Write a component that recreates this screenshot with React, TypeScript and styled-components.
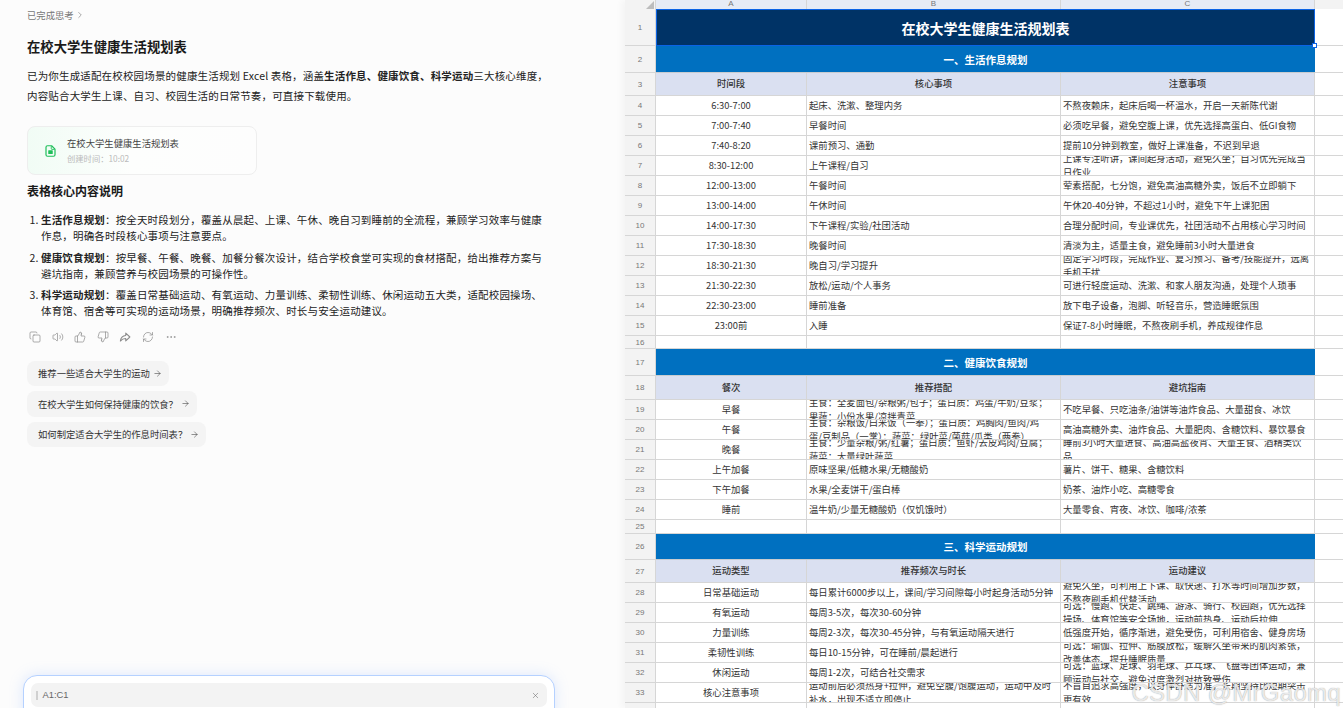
import styled, { createGlobalStyle } from "styled-components";
import {
  ArrowRight,
  ChevronRight,
  Copy,
  Ellipsis,
  RefreshCw,
  ThumbsDown,
  ThumbsUp,
  Volume2,
  X,
} from "lucide-react";

const GlobalStyle = createGlobalStyle`
  html, body {
    margin: 0;
    padding: 0;
    background: #fff;
  }
  * {
    box-sizing: border-box;
  }
`;

const FONT = `"Noto Sans CJK SC", "Noto Sans", sans-serif`;
const COLUMNS = "31px 151px 254px 254px 28px";
const LINE = "#d6d6d6";

const Page = styled.div`
  display: flex;
  width: 1343px;
  height: 708px;
  overflow: hidden;
  font-family: ${FONT};
  color: #222;
`;

/* ---------- chat side ---------- */

const ChatPanel = styled.div`
  flex: 0 0 625px;
  height: 708px;
  padding: 8px 0 0 27px;
  background: #fcfcfc;
  overflow: hidden;
`;

const Thinking = styled.div`
  display: flex;
  align-items: center;
  gap: 1px;
  height: 14px;
  font-size: 9.33px;
  line-height: 14px;
  color: #777;
`;

const Title = styled.h1`
  margin: 15px 0 0;
  font-size: 13.33px;
  line-height: 20px;
  font-weight: 700;
  color: #1a1a1a;
`;

const Intro = styled.p`
  width: 522px;
  margin: 9px 0 0;
  font-size: 10.5px;
  letter-spacing: 0.16px;
  line-height: 20px;
  color: #222;

  b {
    font-weight: 700;
  }
`;

const FileCard = styled.div`
  display: flex;
  align-items: center;
  gap: 11px;
  width: 230px;
  height: 49px;
  margin-top: 20px;
  padding-left: 17px;
  border: 1px solid #eeeeee;
  border-radius: 8px;
  background: linear-gradient(90deg, #f1fcf5 0%, #fdfefd 45%, #fdfdfd 100%);
  color: #1fbf5a;
`;

const FileName = styled.div`
  font-size: 9.33px;
  line-height: 15px;
  color: #444;
`;

const FileTime = styled.div`
  font-size: 8.3px;
  line-height: 15px;
  color: #bbb;
`;

const SubTitle = styled.h2`
  margin: 8px 0 0;
  font-size: 12px;
  line-height: 16px;
  font-weight: 700;
  color: #1a1a1a;
`;

const List = styled.ol`
  display: flex;
  flex-direction: column;
  gap: 5.5px;
  width: 518px;
  margin: 13px 0 0;
  padding: 0 0 0 14px;
  font-size: 10.5px;
  letter-spacing: 0.16px;
  line-height: 16px;
  color: #222;

  b {
    font-weight: 700;
  }
`;

const Actions = styled.div`
  display: flex;
  align-items: center;
  gap: 10.6px;
  height: 12px;
  margin: 12px 0 0 2px;
  color: #8a8a8a;
`;

const Suggestions = styled.div`
  display: flex;
  flex-direction: column;
  align-items: flex-start;
  gap: 5px;
  margin-top: 17.5px;
`;

const Pill = styled.div`
  display: flex;
  align-items: center;
  gap: 3px;
  height: 25.5px;
  padding: 0 7px 0 11px;
  border-radius: 8px;
  background: #f4f4f4;
  font-size: 9.33px;
  color: #333;
`;

const Composer = styled.div`
  width: 532px;
  height: 50px;
  margin: 228px 0 0 -4px;
  padding: 7px 7px 0;
  border: 1px solid #b5d1ff;
  border-radius: 14px;
  background: #fff;
  box-shadow: 0 0 14px rgba(140, 180, 255, 0.28);
`;

const Quote = styled.div`
  display: flex;
  align-items: center;
  gap: 5px;
  height: 24px;
  padding: 0 7px 0 5px;
  border-radius: 7px;
  background: #f3f3f3;
  font-family: "Liberation Sans", sans-serif;
  font-size: 9.33px;
  color: #666;
`;

const QuoteBar = styled.span`
  width: 1.5px;
  height: 9px;
  background: #d0d0d0;
`;

const QuoteText = styled.span`
  flex: 1;
`;

/* ---------- sheet side ---------- */

const Sheet = styled.div`
  position: relative;
  flex: 1;
  height: 708px;
  overflow: hidden;
  background: #fff;
  box-shadow: -4px 0 6px rgba(0, 0, 0, 0.03);
`;

const SheetRow = styled.div<{ $h: number }>`
  display: grid;
  grid-template-columns: ${COLUMNS};
  height: ${(p) => p.$h}px;
`;

const Corner = styled.div`
  position: relative;
  background: #f3f3f3;
  border-right: 1px solid ${LINE};

  &::after {
    content: "";
    position: absolute;
    right: 1px;
    bottom: 0;
    border-left: 8px solid transparent;
    border-bottom: 8px solid #bdbdbd;
  }
`;

const ColHead = styled.div`
  display: flex;
  justify-content: center;
  align-items: flex-start;
  overflow: hidden;
  background: #e6ebf5;
  border-right: 1px solid ${LINE};
  font-family: "Liberation Sans", sans-serif;
  font-size: 8px;
  line-height: 8px;
  color: #777;
`;

const ColTail = styled.div`
  background: #f3f3f3;
`;

const RowHead = styled.div`
  display: flex;
  justify-content: center;
  align-items: center;
  background: #f3f3f3;
  border-right: 1px solid ${LINE};
  border-bottom: 1px solid ${LINE};
  font-family: "Liberation Sans", sans-serif;
  font-size: 8px;
  color: #777;
`;

const Cell = styled.div<{ $center?: boolean }>`
  display: flex;
  align-items: center;
  justify-content: ${(p) => (p.$center ? "center" : "flex-start")};
  padding: 0 2px;
  overflow: hidden;
  border-right: 1px solid ${LINE};
  border-bottom: 1px solid ${LINE};
  font-size: 9.33px;
  line-height: 13.5px;
  color: #333;
  white-space: pre-line;
  text-align: ${(p) => (p.$center ? "center" : "left")};
`;

const Tail = styled.div`
  border-bottom: 1px solid ${LINE};
`;

const HeadCell = styled(Cell)`
  justify-content: center;
  background: #dae0f1;
  font-weight: 500;
  color: #333;
`;

const SectionCell = styled.div`
  grid-column: span 3;
  display: flex;
  justify-content: center;
  align-items: center;
  background: #0070c0;
  border-bottom: 1px solid #c8ccd0;
  font-size: 10.5px;
  font-weight: 700;
  color: #fff;
`;

const TitleCell = styled.div`
  position: relative;
  grid-column: span 3;
  display: flex;
  justify-content: center;
  align-items: center;
  background: #003366;
  border: 1px solid #0b63e5;
  font-size: 14px;
  font-weight: 700;
  color: #fff;
`;

const FillHandle = styled.span`
  position: absolute;
  right: -3px;
  bottom: -3px;
  width: 5px;
  height: 5px;
  background: #fff;
  border: 1px solid #0b63e5;
`;

const Watermark = styled.div`
  position: absolute;
  right: 2px;
  bottom: 1px;
  font-family: "Liberation Sans", sans-serif;
  font-size: 24px;
  letter-spacing: 0.3px;
  color: rgba(255, 255, 255, 0.78);
  text-shadow: 0 0 1px rgba(110, 110, 110, 0.75);
  white-space: nowrap;
`;

const SheetIcon = () => (
  <svg width="11" height="12" viewBox="0 0 14 16" fill="none">
    <path
      d="M3 1h5.5L13 5.5V13a2 2 0 0 1-2 2H3a2 2 0 0 1-2-2V3a2 2 0 0 1 2-2Z"
      stroke="currentColor"
      strokeWidth="1.6"
      strokeLinejoin="round"
    />
    <rect x="4" y="7" width="6" height="5" rx="0.8" fill="currentColor" />
    <path d="M8 1.5V5a.8.8 0 0 0 .8.8h3.7" stroke="currentColor" strokeWidth="1.2" />
  </svg>
);

const ShareIcon = () => (
  <svg width="12" height="12" viewBox="0 0 16 16" fill="none">
    <path
      d="M9 2.8 14.5 8 9 13.2V10C6 10 3.7 11 1.8 13.4 2.3 9.4 4.8 6.4 9 6Z"
      stroke="currentColor"
      strokeWidth="1.4"
      strokeLinejoin="round"
    />
  </svg>
);

type Row = [string, string, string];

const scheduleRows: Row[] = [
  ["6:30-7:00", "起床、洗漱、整理内务", "不熬夜赖床，起床后喝一杯温水，开启一天新陈代谢"],
  ["7:00-7:40", "早餐时间", "必须吃早餐，避免空腹上课，优先选择高蛋白、低GI食物"],
  ["7:40-8:20", "课前预习、通勤", "提前10分钟到教室，做好上课准备，不迟到早退"],
  ["8:30-12:00", "上午课程/自习", "上课专注听讲，课间起身活动，避免久坐；自习优先完成当日作业"],
  ["12:00-13:00", "午餐时间", "荤素搭配，七分饱，避免高油高糖外卖，饭后不立即躺下"],
  ["13:00-14:00", "午休时间", "午休20-40分钟，不超过1小时，避免下午上课犯困"],
  ["14:00-17:30", "下午课程/实验/社团活动", "合理分配时间，专业课优先，社团活动不占用核心学习时间"],
  ["17:30-18:30", "晚餐时间", "清淡为主，适量主食，避免睡前3小时大量进食"],
  ["18:30-21:30", "晚自习/学习提升", "固定学习时段，完成作业、复习预习、备考/技能提升，远离手机干扰"],
  ["21:30-22:30", "放松/运动/个人事务", "可进行轻度运动、洗漱、和家人朋友沟通，处理个人琐事"],
  ["22:30-23:00", "睡前准备", "放下电子设备，泡脚、听轻音乐，营造睡眠氛围"],
  ["23:00前", "入睡", "保证7-8小时睡眠，不熬夜刷手机，养成规律作息"],
];

const dietRows: Row[] = [
  ["早餐", "主食：全麦面包/杂粮粥/包子；蛋白质：鸡蛋/牛奶/豆浆；\n果蔬：小份水果/凉拌青菜", "不吃早餐、只吃油条/油饼等油炸食品、大量甜食、冰饮"],
  ["午餐", "主食：杂粮饭/白米饭（一拳）；蛋白质：鸡胸肉/鱼肉/鸡\n蛋/豆制品（一掌）；蔬菜：绿叶菜/菌菇/瓜类（两拳）", "高油高糖外卖、油炸食品、大量肥肉、含糖饮料、暴饮暴食"],
  ["晚餐", "主食：少量杂粮/粥/红薯；蛋白质：鱼虾/去皮鸡肉/豆腐；\n蔬菜：大量绿叶蔬菜", "睡前3小时大量进食、高油高盐夜宵、大量主食、酒精类饮\n品"],
  ["上午加餐", "原味坚果/低糖水果/无糖酸奶", "薯片、饼干、糖果、含糖饮料"],
  ["下午加餐", "水果/全麦饼干/蛋白棒", "奶茶、油炸小吃、高糖零食"],
  ["睡前", "温牛奶/少量无糖酸奶（仅饥饿时）", "大量零食、宵夜、冰饮、咖啡/浓茶"],
];

const sportRows: Row[] = [
  ["日常基础运动", "每日累计6000步以上，课间/学习间隙每小时起身活动5分钟", "避免久坐，可利用上下课、取快递、打水等时间增加步数，不熬夜刷手机代替活动"],
  ["有氧运动", "每周3-5次，每次30-60分钟", "可选：慢跑、快走、跳绳、游泳、骑行、校园跑，优先选择操场、体育馆等安全场地，运动前热身、运动后拉伸"],
  ["力量训练", "每周2-3次，每次30-45分钟，与有氧运动隔天进行", "低强度开始，循序渐进，避免受伤，可利用宿舍、健身房场"],
  ["柔韧性训练", "每日10-15分钟，可在睡前/晨起进行", "可选：瑜伽、拉伸、筋膜放松，缓解久坐带来的肌肉紧张，改善体态、提升睡眠质量"],
  ["休闲运动", "每周1-2次，可结合社交需求", "可选：篮球、足球、羽毛球、乒乓球、飞盘等团体运动，兼顾运动与社交，避免过度激烈对抗致受伤"],
  ["核心注意事项", "运动前后必须热身+拉伸，避免空腹/饱腹运动，运动中及时补水，出现不适立即停止", "不盲目追求高强度，以身体舒适为准，长期坚持比短期突击更有效"],
];

const DataRows = ({ rows, start }: { rows: Row[]; start: number }) => (
  <>
    {rows.map((r, i) => (
      <SheetRow $h={20} key={r[0]}>
        <RowHead>{start + i}</RowHead>
        <Cell $center>{r[0]}</Cell>
        <Cell>{r[1]}</Cell>
        <Cell>{r[2]}</Cell>
        <Tail />
      </SheetRow>
    ))}
  </>
);

const Section = ({ num, text, h }: { num: number; text: string; h: number }) => (
  <SheetRow $h={h}>
    <RowHead>{num}</RowHead>
    <SectionCell>{text}</SectionCell>
    <Tail />
  </SheetRow>
);

const Heads = ({ num, h, labels }: { num: number; h: number; labels: Row }) => (
  <SheetRow $h={h}>
    <RowHead>{num}</RowHead>
    {labels.map((l) => (
      <HeadCell key={l}>{l}</HeadCell>
    ))}
    <Tail />
  </SheetRow>
);

const Blank = ({ num, h }: { num: number; h: number }) => (
  <SheetRow $h={h}>
    <RowHead>{num}</RowHead>
    <Cell />
    <Cell />
    <Cell />
    <Tail />
  </SheetRow>
);

const suggestions = [
  "推荐一些适合大学生的运动",
  "在校大学生如何保持健康的饮食？",
  "如何制定适合大学生的作息时间表？",
];

export default function App() {
  return (
    <Page>
      <GlobalStyle />
      <ChatPanel>
        <Thinking>
          已完成思考
          <ChevronRight size={10} strokeWidth={1.5} />
        </Thinking>
        <Title>在校大学生健康生活规划表</Title>
        <Intro>
          已为你生成适配在校校园场景的健康生活规划 Excel 表格，涵盖
          <b>生活作息、健康饮食、科学运动</b>
          三大核心维度，内容贴合大学生上课、自习、校园生活的日常节奏，可直接下载使用。
        </Intro>
        <FileCard>
          <SheetIcon />
          <div>
            <FileName>在校大学生健康生活规划表</FileName>
            <FileTime>创建时间：10:02</FileTime>
          </div>
        </FileCard>
        <SubTitle>表格核心内容说明</SubTitle>
        <List>
          <li>
            <b>生活作息规划</b>
            ：按全天时段划分，覆盖从晨起、上课、午休、晚自习到睡前的全流程，兼顾学习效率与健康作息，明确各时段核心事项与注意要点。
          </li>
          <li>
            <b>健康饮食规划</b>
            ：按早餐、午餐、晚餐、加餐分餐次设计，结合学校食堂可实现的食材搭配，给出推荐方案与避坑指南，兼顾营养与校园场景的可操作性。
          </li>
          <li>
            <b>科学运动规划</b>
            ：覆盖日常基础运动、有氧运动、力量训练、柔韧性训练、休闲运动五大类，适配校园操场、体育馆、宿舍等可实现的运动场景，明确推荐频次、时长与安全运动建议。
          </li>
        </List>
        <Actions>
          <Copy size={12} strokeWidth={1.4} />
          <Volume2 size={12} strokeWidth={1.4} />
          <ThumbsUp size={12} strokeWidth={1.4} />
          <ThumbsDown size={12} strokeWidth={1.4} />
          <ShareIcon />
          <RefreshCw size={12} strokeWidth={1.4} />
          <Ellipsis size={12} strokeWidth={1.4} />
        </Actions>
        <Suggestions>
          {suggestions.map((s) => (
            <Pill key={s}>
              {s}
              <ArrowRight size={9} strokeWidth={1.4} />
            </Pill>
          ))}
        </Suggestions>
        <Composer>
          <Quote>
            <QuoteBar />
            <QuoteText>A1:C1</QuoteText>
            <X size={9} strokeWidth={1.4} />
          </Quote>
        </Composer>
      </ChatPanel>

      <Sheet>
        <SheetRow $h={9}>
          <Corner />
          <ColHead>A</ColHead>
          <ColHead>B</ColHead>
          <ColHead>C</ColHead>
          <ColTail />
        </SheetRow>
        <SheetRow $h={37}>
          <RowHead>1</RowHead>
          <TitleCell>
            在校大学生健康生活规划表
            <FillHandle />
          </TitleCell>
          <Tail />
        </SheetRow>
        <Section num={2} text="一、生活作息规划" h={27} />
        <Heads num={3} h={23} labels={["时间段", "核心事项", "注意事项"]} />
        <DataRows rows={scheduleRows} start={4} />
        <Blank num={16} h={13} />
        <Section num={17} text="二、健康饮食规划" h={27} />
        <Heads num={18} h={24} labels={["餐次", "推荐搭配", "避坑指南"]} />
        <DataRows rows={dietRows} start={19} />
        <Blank num={25} h={14} />
        <Section num={26} text="三、科学运动规划" h={26} />
        <Heads num={27} h={23} labels={["运动类型", "推荐频次与时长", "运动建议"]} />
        <DataRows rows={sportRows} start={28} />
        <Blank num={34} h={20} />
        <Watermark>CSDN @MrGaomq</Watermark>
      </Sheet>
    </Page>
  );
}
